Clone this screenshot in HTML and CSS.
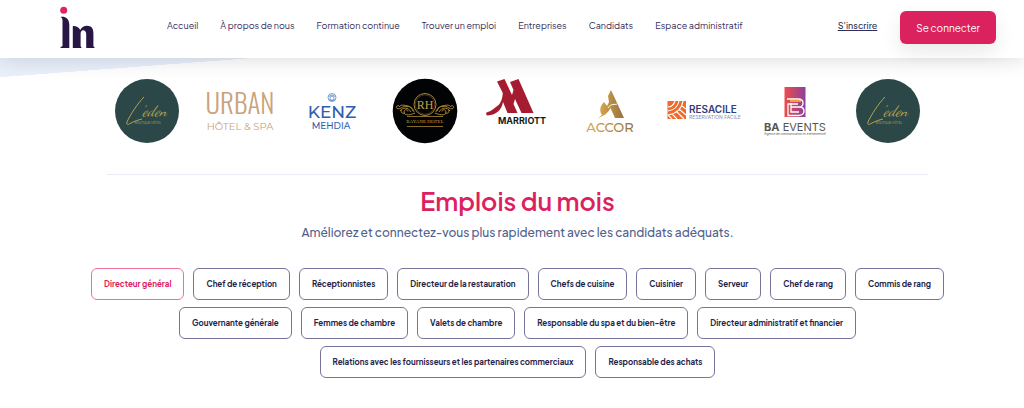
FILE: index.html
```html
<!DOCTYPE html>
<html lang="fr">
<head>
<meta charset="utf-8">
<meta name="viewport" content="width=device-width, initial-scale=1">
<title>Emplois du mois</title>
<link rel="stylesheet" href="styles.css">
</head>
<body>
<header class="header">
  <a class="brand" href="#" aria-label="Accueil du site">
    <svg width="36" height="44" viewBox="0 0 36 44" aria-hidden="true">
      <circle cx="3.7" cy="5.2" r="3.5" fill="#e32360"/>
      <path fill="#281745" d="M.5 12C5 11.2 9.3 13.5 9.3 20V43H.5V42.3L2.5 41V15.5C2.5 13.5 1.8 12.7.5 12Z"/>
      <path fill="#281745" d="M12.8 21C16 20.8 19 22.3 20.2 25C22 22.2 24 20.8 27 20.8C31.5 20.8 33.4 23.5 33.4 28.5V41.3L34.5 42.3V43H26.2V29C26.2 26.2 24.4 24.9 22.8 25.3C21.3 25.7 20.6 27 20.6 29V41.3L21.4 42.3V43H12.8Z"/>
    </svg>
  </a>
  <nav class="nav" aria-label="Navigation principale">
    <a href="#">Accueil</a>
    <a href="#">À propos de nous</a>
    <a href="#">Formation continue</a>
    <a href="#">Trouver un emploi</a>
    <a href="#">Entreprises</a>
    <a href="#">Candidats</a>
    <a href="#">Espace administratif</a>
  </nav>
  <div class="account">
    <a class="signup" href="#">S'inscrire</a>
    <button class="login" type="button">Se connecter</button>
  </div>
</header>
<main class="main">
  <section class="partners" aria-label="Partenaires">
    <svg class="partner" viewBox="0 0 78 66" role="img" aria-label="L'eden">
      <g id="eden">
        <circle cx="39" cy="33" r="32" fill="#2b4748"/>
        <path d="M36 19C30 25 22 37 19 44C18 47 20 47 23 45C27 43 30 42 34 41" fill="none" stroke="#b7a44d" stroke-width="1"/>
        <text x="33" y="38" font-size="15" fill="#b7a44d" class="script">'eden</text>
        <text x="40" y="46" class="sans" font-size="3" fill="#b7a44d" text-anchor="middle">BOUTIQUE HÔTEL</text>
      </g>
    </svg>
    <svg class="partner" viewBox="0 0 78 66" role="img" aria-label="Urban Hôtel &amp; Spa">
      <g fill="#c9a27c" text-anchor="middle">
        <text x="39" y="36" class="narrow" font-size="27">URBAN</text>
        <text x="39" y="52" class="wide" font-size="10">HÔTEL &amp; SPA</text>
      </g>
    </svg>
    <svg class="partner" viewBox="0 0 78 66" role="img" aria-label="Kenz Mehdia">
      <g fill="none" stroke="#5b86c4" stroke-width=".8">
        <circle cx="39" cy="19.5" r="4"/><circle cx="39" cy="20.2" r="2"/>
        <path d="M35.5 18.5Q39 15.5 42.5 18.5M36 21.7Q39 24 42 21.7"/>
      </g>
      <g fill="#2f5eb0" text-anchor="middle" class="wide medium">
        <text x="39" y="40" font-size="17">KENZ</text>
        <text x="38" y="51" font-size="9">MEHDIA</text>
      </g>
    </svg>
    <svg class="partner" viewBox="0 0 78 66" role="img" aria-label="Rayane Hotel">
      <circle cx="39" cy="33" r="32.3" fill="#020304"/>
      <g fill="none" stroke="#a98634">
        <circle cx="39" cy="26.5" r="11" stroke-width="1"/>
        <circle cx="39" cy="26.5" r="9.7" stroke-width=".4"/>
        <path d="M21 38.5H57M21 48.5H57" stroke-width=".8"/>
        <g id="scroll" stroke-width="1">
          <path d="M29 35C22 38 18 37 18 34C18 31 22 31 22 33.5M27 33C25 27 19 27 15 30C12 32 9 30 11 28C12 27 14 28 13 29M22 29C18 26 14 27 13 29M25 34C22 29 17 29 14 33M19 35C16 36 14 34 16 32M28 34C27 30 24 28 20 28"/>
        </g>
        <use href="#scroll" transform="matrix(-1 0 0 1 78 0)"/>
      </g>
      <g fill="#c5a047" class="serif" text-anchor="middle">
        <text x="39" y="31" font-size="12">RH</text>
        <text x="39" y="45" font-size="5">RAYANE HOTEL</text>
      </g>
    </svg>
    <svg class="partner" viewBox="0 0 78 66" role="img" aria-label="Marriott">
      <path fill="#a51c30" d="M19 3.5L26.5 1L34 17L35.5 12L32 4L40.5 1L55.5 35H43.5L37 21L35.5 26L39.5 35H29.5L25 24C24 31 19 37 9.5 37.5Q7.5 37 8.5 34.5C14 33 16 30 20 27.5C23 25 24.5 20 24.8 15Z"/>
      <text x="44" y="46" class="sans bold" font-size="9" text-anchor="middle" fill="#181818">MARRIOTT</text>
    </svg>
    <svg class="partner" viewBox="0 0 78 66" role="img" aria-label="Accor">
      <defs><linearGradient id="gold"><stop offset="0" stop-color="#dca94f"/><stop offset="1" stop-color="#94713f"/></linearGradient></defs>
      <path fill="url(#gold)" d="M37 18L40 12L53 40H44L39.5 30C37 35 33 38 27 40L31 37C28 33 29 28 33 24L36 28L38 24Z"/>
      <path d="M37 30C40 25 44 27 46 26" stroke="#fff" fill="none"/>
      <text x="39" y="54" class="wide medium" font-size="13" text-anchor="middle" fill="url(#gold)">ACCOR</text>
    </svg>
    <svg class="partner" viewBox="0 0 78 66" role="img" aria-label="Resacile">
      <path fill="#ed6b2d" d="M3.5 23H22V41H3.5Z"/>
      <g fill="none" stroke="#fff" stroke-width="1.1">
        <path d="M4 29Q9 29 11 23M4 33Q13 32 15 23M4 37Q17 35 19 23M12 33L20 41M15 31L22 37M8 36L13 41M4 37L8 41M18 28L22 31"/>
      </g>
      <text x="25" y="35" class="sans semi" font-size="10" fill="#333c7a">RESACILE</text>
      <text x="25" y="41" class="sans" font-size="5" fill="#8990b7">RESERVATION FACILE</text>
    </svg>
    <svg class="partner" viewBox="0 0 78 66" role="img" aria-label="BA Events">
      <defs><linearGradient id="event"><stop offset="0" stop-color="#ee4b4b"/><stop offset="1" stop-color="#8d419b"/></linearGradient></defs>
      <path fill="url(#event)" d="M28.5 9H49.5V39H28.5Z"/>
      <path d="M34 23H45" stroke="#f0a32f" stroke-width="2"/>
      <path d="M31 21H42Q47 21 47 25T43 29Q48 29 48 33T43 37.5H32V26H42M35 29H43M35 25V34H43" fill="none" stroke="#fff" stroke-width="1.3"/>
      <text x="39" y="53" class="sans" font-size="11" text-anchor="middle" fill="#555"><tspan class="bold">BA</tspan> EVENTS</text>
      <text x="39" y="57" class="sans" font-size="3" text-anchor="middle" fill="#555">Agence de communication et événementiel</text>
    </svg>
    <svg class="partner" viewBox="0 0 78 66" role="img" aria-label="L'eden"><use href="#eden"/></svg>
  </section>
  <section class="jobs">
    <h1 class="title">Emplois du mois</h1>
    <p class="subtitle">Améliorez et connectez-vous plus rapidement avec les candidats adéquats.</p>
    <div class="categories">
      <button class="pill active" type="button">Directeur général</button>
      <button class="pill" type="button">Chef de réception</button>
      <button class="pill" type="button">Réceptionnistes</button>
      <button class="pill" type="button">Directeur de la restauration</button>
      <button class="pill" type="button">Chefs de cuisine</button>
      <button class="pill" type="button">Cuisinier</button>
      <button class="pill" type="button">Serveur</button>
      <button class="pill" type="button">Chef de rang</button>
      <button class="pill" type="button">Commis de rang</button>
      <button class="pill" type="button">Gouvernante générale</button>
      <button class="pill" type="button">Femmes de chambre</button>
      <button class="pill" type="button">Valets de chambre</button>
      <button class="pill" type="button">Responsable du spa et du bien-être</button>
      <button class="pill" type="button">Directeur administratif et financier</button>
      <button class="pill" type="button">Relations avec les fournisseurs et les partenaires commerciaux</button>
      <button class="pill" type="button">Responsable des achats</button>
    </div>
  </section>
</main>
</body>
</html>
```
FILE: styles.css
```css
* { box-sizing: border-box; }
body {
  margin: 0;
  background: #fff;
  color: #322d59;
  font-family: "Plus Jakarta Sans", Inter, sans-serif;
}
a { color: inherit; text-decoration: none; }
button { font-family: inherit; cursor: pointer; }

.header {
  position: relative;
  display: flex;
  align-items: flex-start;
  padding: 5px 28px 9px 60px;
  background: #fff;
  box-shadow: 0 2px 20px rgba(0, 0, 0, .14);
}
.brand { display: flex; margin-right: 71px; }
.nav {
  display: flex;
  gap: 22px;
  padding-top: 14px;
  font-size: 9px;
  line-height: 14px;
  white-space: nowrap;
}
.account {
  display: flex;
  align-items: flex-start;
  gap: 23px;
  margin-left: auto;
  padding-top: 6px;
}
.signup {
  padding-top: 8px;
  font-size: 9px;
  font-weight: 500;
  line-height: 14px;
  text-decoration: underline;
}
.login {
  height: 33px;
  padding: 0 16px;
  border: 0;
  border-radius: 6px;
  background: #dc215f;
  box-shadow: 0 8px 20px rgba(0, 0, 0, .09);
  color: #fff;
  font-size: 10px;
}

.main {
  padding: 20px 90px 31px 101px;
  background: linear-gradient(to bottom right, #eaf0fa 50%, transparent 51%) 0 0 / 250px 19px no-repeat;
}
.partners {
  display: grid;
  grid-template-columns: repeat(9, 1fr);
  justify-items: center;
  margin-bottom: 30px;
}
.partner { display: block; width: 78px; height: 66px; overflow: visible; }
.script { font-family: "Dancing Script", Caveat, "Liberation Serif", serif; font-style: italic; }
.serif { font-family: "Liberation Serif", serif; }
.sans { font-family: Inter, sans-serif; }
.narrow { font-family: "Oswald", Roboto, sans-serif; font-weight: 300; }
.wide { font-family: Montserrat, Lato, sans-serif; }
.medium { font-weight: 500; }
.bold { font-weight: 700; }
.semi { font-weight: 600; }

.jobs {
  margin: 0 6px;
  padding-top: 10px;
  border-top: 1px solid #ebebf7;
  text-align: center;
}
.title {
  margin: 0;
  color: #dc215f;
  font-size: 25px;
  font-weight: 600;
  line-height: 32px;
}
.subtitle {
  margin: 6px 0 25px;
  color: #52618c;
  font-size: 12px;
  font-weight: 500;
  line-height: 20px;
}
.categories {
  display: flex;
  flex-wrap: wrap;
  justify-content: center;
  gap: 7px 9px;
  margin: 0 -20px;
}
.pill {
  height: 32px;
  padding: 0 12px;
  border: 1px solid #77749a;
  border-radius: 6px;
  background: #fff;
  color: #25244a;
  font-size: 8px;
  font-weight: 700;
}
.pill.active { border-color: #ee7199; color: #dc215f; }
```
